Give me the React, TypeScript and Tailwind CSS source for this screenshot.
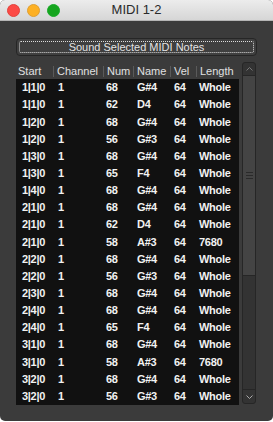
const rows: [string, string, string, string, string, string][] = [
  ["1|1|0", "1", "68", "G#4", "64", "Whole"],
  ["1|1|0", "1", "62", "D4", "64", "Whole"],
  ["1|2|0", "1", "68", "G#4", "64", "Whole"],
  ["1|2|0", "1", "56", "G#3", "64", "Whole"],
  ["1|3|0", "1", "68", "G#4", "64", "Whole"],
  ["1|3|0", "1", "65", "F4", "64", "Whole"],
  ["1|4|0", "1", "68", "G#4", "64", "Whole"],
  ["2|1|0", "1", "68", "G#4", "64", "Whole"],
  ["2|1|0", "1", "62", "D4", "64", "Whole"],
  ["2|1|0", "1", "58", "A#3", "64", "7680"],
  ["2|2|0", "1", "68", "G#4", "64", "Whole"],
  ["2|2|0", "1", "56", "G#3", "64", "Whole"],
  ["2|3|0", "1", "68", "G#4", "64", "Whole"],
  ["2|4|0", "1", "68", "G#4", "64", "Whole"],
  ["2|4|0", "1", "65", "F4", "64", "Whole"],
  ["3|1|0", "1", "68", "G#4", "64", "Whole"],
  ["3|1|0", "1", "58", "A#3", "64", "7680"],
  ["3|2|0", "1", "68", "G#4", "64", "Whole"],
  ["3|2|0", "1", "56", "G#3", "64", "Whole"],
];

const font = { fontFamily: '"Liberation Sans", Arial, sans-serif' };

function Header() {
  const cols = [
    { label: "Start", w: "w-[35px]" },
    { label: "Channel", w: "w-[50px]" },
    { label: "Num", w: "w-[30px]" },
    { label: "Name", w: "w-[37px]" },
    { label: "Vel", w: "w-[26px]" },
    { label: "Length", w: "w-[40px]" },
  ];
  return (
    <div className="flex h-[16px] items-center text-[11px] text-[#e0e0e0] pl-[2px]">
      {cols.map((c, i) => (
        <div key={c.label} className={`${c.w} flex items-center h-full`}>
          {i > 0 && <div className="w-px h-[11px] bg-[#5a5a5a] mr-[3px]" />}
          <span>{c.label}</span>
        </div>
      ))}
    </div>
  );
}

export default function App() {
  return (
    <div className="w-[273px] h-[422px] bg-white" style={font}>
      <div className="w-[273px] h-[421px] rounded-[5px] overflow-hidden bg-[#3b3b3b] flex flex-col">
        {/* title bar */}
        <div className="h-[21px] relative flex items-center justify-center bg-gradient-to-b from-[#ececec] to-[#d6d6d6] border-b border-[#b5b5b5]">
          <div className="absolute left-[7px] top-[4px] flex gap-[7px]">
            <div className="w-[13px] h-[13px] rounded-full bg-[#fc4a45] border border-[#e0443e]" />
            <div className="w-[13px] h-[13px] rounded-full bg-[#fdb023] border border-[#de9f34]" />
            <div className="w-[13px] h-[13px] rounded-full bg-[#16a51f] border border-[#1aab29]" />
          </div>
          <span className="text-[13px] text-[#2a2a2a]">MIDI 1-2</span>
        </div>

        <div className="px-[16px] pt-[17px]">
          <div className="h-[18px] rounded-[4px] bg-[#3f3f3f] border border-[#262626] p-[2px]">
            <div className="h-full border border-dotted border-[#dcdcdc] rounded-[2px] flex items-center justify-center text-[11px] text-[#e2e2e2]">
              Sound Selected MIDI Notes
            </div>
          </div>
        </div>

        <div className="flex pl-[16px] pt-[7px]">
          <div className="w-[223px] flex flex-col">
            <Header />
            <div className="bg-[#111111] h-[326px]">
              {rows.map((r, i) => (
                <div key={i} className="h-[17.15px] flex items-center text-[11px] font-bold text-[#f2f2f2] tracking-[-0.3px]">
                  <span className="w-[42px] pl-[6px]">{r[0]}</span>
                  <span className="w-[48px]">{r[1]}</span>
                  <span className="w-[31px]">{r[2]}</span>
                  <span className="w-[37px]">{r[3]}</span>
                  <span className="w-[25px]">{r[4]}</span>
                  <span>{r[5]}</span>
                </div>
              ))}
            </div>
          </div>
          <div className="ml-[3px] mt-[-1px] w-[14px] h-[342px] rounded-[3px] border border-[#262626] bg-[#333333] flex flex-col">
            <div className="h-[13px] flex items-center justify-center border-b border-[#262626]">
              <svg width="7" height="4" viewBox="0 0 7 4"><path d="M0.5 3.5 L3.5 0.5 L6.5 3.5" stroke="#777" fill="none" /></svg>
            </div>
            <div className="h-[200px] bg-[#444444] border-b border-[#262626] flex items-center justify-center">
              <div className="flex flex-col gap-[2px]">
                <div className="w-[7px] h-px bg-[#2a2a2a]" />
                <div className="w-[7px] h-px bg-[#2a2a2a]" />
                <div className="w-[7px] h-px bg-[#2a2a2a]" />
              </div>
            </div>
            <div className="flex-1" />
            <div className="h-[14px] flex items-center justify-center border-t border-[#262626]">
              <svg width="7" height="4" viewBox="0 0 7 4"><path d="M0.5 0.5 L3.5 3.5 L6.5 0.5" stroke="#aaa" fill="none" /></svg>
            </div>
          </div>
        </div>
      </div>
    </div>
  );
}
